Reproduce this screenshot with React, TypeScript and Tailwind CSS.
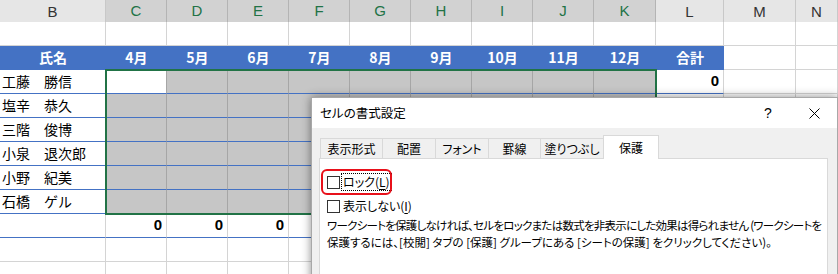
import React from "react";

const ROW_GRID =
  "grid grid-cols-[106px_61px_61px_61px_61px_61px_61px_61px_61px_62px_68px_72px_1fr]";

const LETTERS = ["B", "C", "D", "E", "F", "G", "H", "I", "J", "K", "L", "M", "N"];
const MONTHS = ["4月", "5月", "6月", "7月", "8月", "9月", "10月", "11月", "12月"];
const NAMES = ["工藤　勝信", "塩辛　恭久", "三階　俊博", "小泉　退次郎", "小野　紀美", "石橋　ゲル"];

const jp = "font-['Noto_Sans_CJK_JP',sans-serif]";

function ColumnHeaders() {
  return (
    <div className={`${ROW_GRID} h-[22px]`}>
      {LETTERS.map((l, i) => {
        const selected = i >= 1 && i <= 9;
        return (
          <div
            key={l}
            className={`flex items-center justify-center border-r font-['Liberation_Sans',sans-serif] text-[15px] ${
              selected
                ? "bg-[#d2d2d2] text-[#217346] border-r-[#b4b4b4] border-b-2 border-b-[#217346]"
                : "bg-[#e6e6e6] text-[#333] border-r-[#c8c8c8] border-b border-b-[#9f9f9f]"
            }`}
          >
            {l}
          </div>
        );
      })}
    </div>
  );
}

function PlainRow() {
  return (
    <div className={`${ROW_GRID} h-[24px]`}>
      {LETTERS.map((l) => (
        <div key={l} className="border-r border-b border-[#d4d4d4] bg-white" />
      ))}
    </div>
  );
}

function TitleRow() {
  const cell = `bg-[#4472c4] text-white font-bold text-[14px] flex items-center justify-center border-b border-[#4472c4] ${jp}`;
  return (
    <div className={`${ROW_GRID} h-[24px]`}>
      <div className={cell}>氏名</div>
      {MONTHS.map((m) => (
        <div key={m} className={cell}>
          {m}
        </div>
      ))}
      <div className={cell}>合計</div>
      <div className="border-r border-b border-[#d4d4d4] bg-white" />
      <div className="border-r border-b border-[#d4d4d4] bg-white" />
    </div>
  );
}

function DataRow({ name, first }: { name: string; first: boolean }) {
  return (
    <div className={`${ROW_GRID} h-[24px]`}>
      <div className={`bg-white border-b border-b-[#4472c4] flex items-center pl-[2px] text-[14px] text-black ${jp}`}>
        {name}
      </div>
      {MONTHS.map((m, i) => (
        <div
          key={m}
          className={`border-r border-r-[#a6a6a6] border-b border-b-[#4472c4] ${
            first && i === 0 ? "bg-white" : "bg-[#c6c6c6]"
          }`}
        />
      ))}
      <div className="bg-white border-r border-r-[#d4d4d4] border-b border-b-[#4472c4] flex items-center justify-end pr-[4px] font-['Liberation_Sans',sans-serif] font-bold text-[15px]">
        {first ? "0" : ""}
      </div>
      <div className="border-r border-b border-[#d4d4d4] bg-white" />
      <div className="border-r border-b border-[#d4d4d4] bg-white" />
    </div>
  );
}

function TotalRow() {
  // only C..E show; the rest sit under the dialog
  return (
    <div className={`${ROW_GRID} h-[24px]`}>
      <div className="bg-white border-r border-r-[#d4d4d4] border-b border-b-[#4472c4]" />
      {[...MONTHS, "合計"].map((m, i) => (
        <div
          key={m}
          className="bg-white border-r border-r-[#d4d4d4] border-b border-b-[#4472c4] flex items-center justify-end pr-[4px] font-['Liberation_Sans',sans-serif] font-bold text-[15px]"
        >
          {i < 3 ? "0" : ""}
        </div>
      ))}
      <div className="border-r border-b border-[#d4d4d4] bg-white" />
      <div className="border-r border-b border-[#d4d4d4] bg-white" />
    </div>
  );
}

const TABS = [
  { label: "表示形式", w: "w-[63px]" },
  { label: "配置", w: "w-[54px]" },
  { label: "フォント", w: "w-[54px]" },
  { label: "罫線", w: "w-[53px]" },
  { label: "塗りつぶし", w: "w-[64px]" },
  { label: "保護", w: "w-[56px]", active: true },
];

function Checkbox() {
  return <span className="inline-block w-[13px] h-[13px] border border-[#333] bg-white shrink-0" />;
}

function FormatDialog() {
  return (
    <div
      className={`absolute left-[311px] top-[97px] w-[527px] h-[190px] bg-[#f0f0f0] border border-[#a8a8a8] shadow-[0_0_9px_rgba(0,0,0,0.45)] ${jp} [font-feature-settings:'palt'] text-[12px] text-black`}
    >
      {/* Title bar */}
      <div className="h-[30px] bg-white flex items-center">
        <span className="pl-[8px] text-[12.5px]">セルの書式設定</span>
        <div className="ml-auto flex h-full">
          <div className="w-[46px] flex items-center justify-center text-[14px] font-['Liberation_Sans',sans-serif]">?</div>
          <div className="w-[46px] flex items-center justify-center">
            <svg width="11" height="11" viewBox="0 0 11 11">
              <path d="M0.5 0.5L10.5 10.5M10.5 0.5L0.5 10.5" stroke="#000" strokeWidth="1" />
            </svg>
          </div>
        </div>
      </div>

      <div className="pl-[7px] pr-[9px] pt-[7px]">
        {/* Tabs */}
        <div className="flex items-end h-[24px] pl-[1px] relative z-10 -mb-px">
          {TABS.map((t, i) =>
            t.active ? (
              <div
                key={t.label}
                className={`${t.w} h-[24px] -ml-px bg-white border border-b-0 border-[#d9d9d9] flex items-center justify-center`}
              >
                {t.label}
              </div>
            ) : (
              <div
                key={t.label}
                className={`${t.w} h-[21px] ${i > 0 ? "-ml-px" : ""} bg-[#f0f0f0] border border-[#d9d9d9] flex items-center justify-center`}
              >
                {t.label}
              </div>
            )
          )}
        </div>

        {/* Panel */}
        <div className="bg-white border border-[#d9d9d9] h-[140px] pt-[14px] pl-[7px]">
          <div className="relative flex items-center h-[18px]">
            <Checkbox />
            <span className="ml-[2px] px-[1px] leading-[16px] outline outline-1 outline-dotted outline-black">
              ロック(<span className="underline underline-offset-2">L</span>)
            </span>
            <div className="absolute -left-[6px] -top-[4px] w-[71px] h-[26px] border-2 border-[#e8101a] rounded-[6px]" />
          </div>
          <div className="flex items-center h-[18px] mt-[6px]">
            <Checkbox />
            <span className="ml-[3px]">
              表示しない(<span className="underline underline-offset-2">I</span>)
            </span>
          </div>
          <div className="mt-[2px] leading-[17px] text-[11.5px]">
            <div className="whitespace-nowrap tracking-[-0.75px]">
              ワークシートを保護しなければ、セルをロックまたは数式を非表示にした効果は得られません (ワークシートを
            </div>
            <div className="whitespace-nowrap">
              保護するには、[校閲] タブの [保護] グループにある [シートの保護] をクリックしてください)。
            </div>
          </div>
        </div>
      </div>
    </div>
  );
}

export default function App() {
  return (
    <div className="relative w-[838px] h-[274px] overflow-hidden bg-white">
      <ColumnHeaders />
      <PlainRow />
      <TitleRow />
      {NAMES.map((n, i) => (
        <DataRow key={n} name={n} first={i === 0} />
      ))}
      <TotalRow />
      <PlainRow />
      <PlainRow />

      {/* Active selection C5:K10 */}
      <div className="absolute left-[105px] top-[69px] w-[552px] h-[146px] border-2 border-[#217346] pointer-events-none" />

      <FormatDialog />
    </div>
  );
}
